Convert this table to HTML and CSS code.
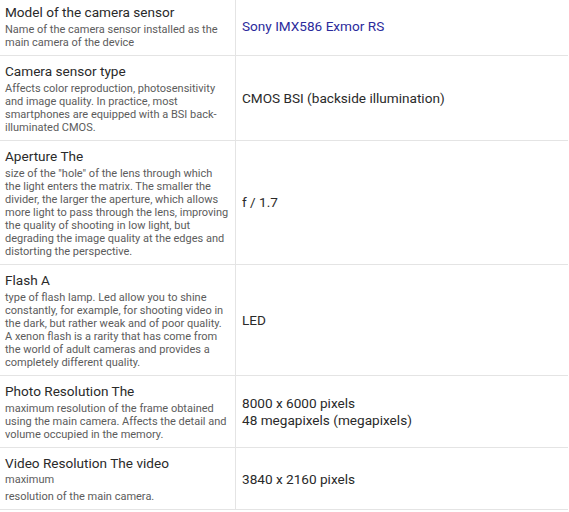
FILE: index.html
```html
<!DOCTYPE html>
<html lang="en">
<head>
<meta charset="utf-8">
<title>Camera specs</title>
<link rel="stylesheet" href="styles.css">
</head>
<body>
<table class="specs">
  <tr>
    <td class="name">
      <div class="title">Model of the camera sensor</div>
      <div class="desc">Name of the camera sensor installed as the main camera of the device</div>
    </td>
    <td class="value"><a class="link" href="#">Sony IMX586 Exmor RS</a></td>
  </tr>
  <tr>
    <td class="name">
      <div class="title">Camera sensor type</div>
      <div class="desc">Affects color reproduction, photosensitivity and image quality. In practice, most smartphones are equipped with a BSI back-illuminated CMOS.</div>
    </td>
    <td class="value">CMOS BSI (backside illumination)</td>
  </tr>
  <tr>
    <td class="name">
      <div class="title">Aperture The</div>
      <div class="desc">size of the "hole" of the lens through which the light enters the matrix. The smaller the divider, the larger the aperture, which allows more light to pass through the lens, improving the quality of shooting in low light, but degrading the image quality at the edges and distorting the perspective.</div>
    </td>
    <td class="value">f / 1.7</td>
  </tr>
  <tr>
    <td class="name">
      <div class="title">Flash A</div>
      <div class="desc">type of flash lamp. Led allow you to shine constantly, for example, for shooting video in the dark, but rather weak and of poor quality. A xenon flash is a rarity that has come from the world of adult cameras and provides a completely different quality.</div>
    </td>
    <td class="value">LED</td>
  </tr>
  <tr>
    <td class="name">
      <div class="title">Photo Resolution The</div>
      <div class="desc">maximum resolution of the frame obtained using the main camera. Affects the detail and volume occupied in the memory.</div>
    </td>
    <td class="value">8000 x 6000 pixels<br>48 megapixels (megapixels)</td>
  </tr>
  <tr class="last">
    <td class="name">
      <div class="title">Video Resolution The video</div>
      <div class="desc loose">maximum<br>resolution of the main camera.</div>
    </td>
    <td class="value">3840 x 2160 pixels</td>
  </tr>
</table>
</body>
</html>
```

FILE: styles.css
```css
html, body {
  margin: 0;
  padding: 0;
  background: #ffffff;
}

body {
  font-family: Roboto, "Liberation Sans", sans-serif;
  color: #2a2a2a;
}

.specs {
  width: 568px;
  margin-top: -3px;
  border-collapse: collapse;
}

.specs td {
  border-bottom: 1px solid #e4e4e4;
  padding: 6px 5px 6px 5px;
}

.specs .last td {
  padding-bottom: 4px;
}

.name {
  width: 225px;
  border-right: 1px solid #e4e4e4;
  vertical-align: top;
}

.title {
  font-size: 13.6px;
  line-height: 18px;
  color: #2a2a2a;
}

.desc {
  font-size: 11px;
  line-height: 13px;
  color: #5c5c5c;
  margin-top: 2px;
}

.desc.loose {
  line-height: 17px;
  margin-top: -1px;
}

.value {
  vertical-align: middle;
  font-size: 13.6px;
  line-height: 17px;
  padding-left: 6px !important;
  color: #2a2a2a;
}

.link {
  color: #2b2b9c;
  text-decoration: none;
}
```
